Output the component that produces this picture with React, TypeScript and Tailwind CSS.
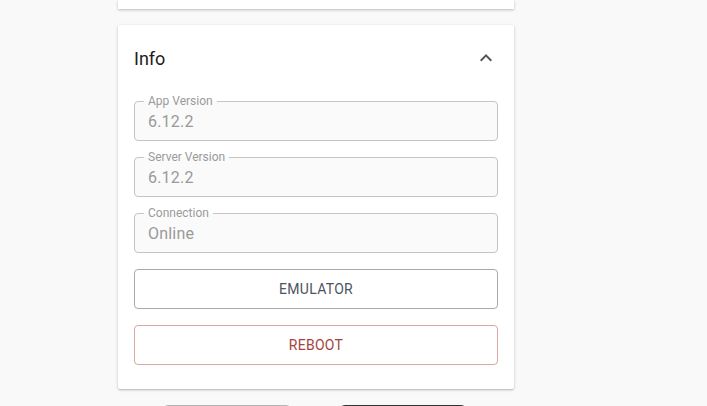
import { ReactNode } from "react";

const fields = [
  { label: "App Version", value: "6.12.2" },
  { label: "Server Version", value: "6.12.2" },
  { label: "Connection", value: "Online" },
];

function ReadOnlyField({ label, value }: { label: string; value: string }) {
  return (
    <fieldset className="h-[47px] rounded-[4px] border border-[#c4c4c4] bg-[#fafafa] px-[13px] pb-[6px]">
      <legend className="ml-[-4px] px-[4px] text-[12px] leading-[14px] text-[#9a9a9a]">
        {label}
      </legend>
      <div className="mt-[2px] text-[16px] leading-6 tracking-[0.2px] text-[#999999]">
        {value}
      </div>
    </fieldset>
  );
}

function OutlineButton({
  children,
  danger,
}: {
  children: ReactNode;
  danger?: boolean;
}) {
  return (
    <button
      className={
        danger
          ? "h-10 w-full rounded-[4px] border border-[#d8a9a4] text-[14px] tracking-[0.3px] text-[#a4453c]"
          : "h-10 w-full rounded-[4px] border border-[#a9a9a9] text-[14px] tracking-[0.3px] text-[#4b5560]"
      }
    >
      {children}
    </button>
  );
}

export default function App() {
  return (
    <div
      className="min-h-[406px] bg-[#f9f9f9] pl-[118px]"
      style={{ fontFamily: "Roboto, 'Liberation Sans', sans-serif" }}
    >
      <div className="w-[396px]">
        {/* tail of the card above */}
        <div className="h-[9px] bg-white shadow-[0_1px_3px_rgba(0,0,0,0.25)]" />

        <div className="mt-4 rounded-[2px] bg-white px-4 pt-[17px] pb-6 shadow-[0_1px_3px_rgba(0,0,0,0.22),0_1px_1px_rgba(0,0,0,0.08)]">
          <div className="flex h-8 items-center justify-between">
            <div className="text-[18px] text-[#202020]">Info</div>
            <svg width="24" height="24" viewBox="0 0 24 24" className="fill-[#555555]">
              <path d="M12 8l-6 6 1.41 1.41L12 10.83l4.59 4.58L18 14z" />
            </svg>
          </div>

          <div className="mt-5 flex flex-col gap-[9px]">
            {fields.map((f) => (
              <ReadOnlyField key={f.label} label={f.label} value={f.value} />
            ))}
          </div>

          <div className="mt-4 flex flex-col gap-4">
            <OutlineButton>EMULATOR</OutlineButton>
            <OutlineButton danger>REBOOT</OutlineButton>
          </div>
        </div>

        <div className="mt-4 flex pl-[44px]">
          <div className="h-10 w-[130px] rounded-[6px] border border-[#b5b5b5] bg-white" />
          <div className="ml-[47px] h-10 w-[128px] rounded-[6px] bg-[#333333]" />
        </div>
      </div>
    </div>
  );
}
